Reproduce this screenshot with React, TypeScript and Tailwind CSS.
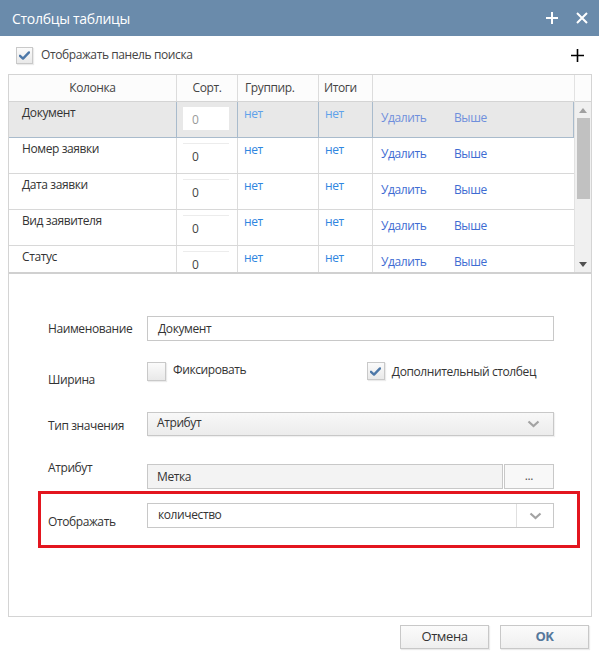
import React from "react";

const font = { fontFamily: '"Open Sans", "Noto Sans", sans-serif' };

function Check({ checked, size = 17 }: { checked: boolean; size?: number }) {
  return (
    <div
      className="flex items-center justify-center border border-[#c9c9c9] bg-gradient-to-b from-[#fbfbfb] to-[#e9e9e9] shadow-[1px_1px_1px_rgba(0,0,0,0.08)] shrink-0"
      style={{ width: size, height: size }}
    >
      {checked && (
        <svg width="11" height="9" viewBox="0 0 11 9">
          <path d="M1 4.8 L4 7.6 L10 1.4" fill="none" stroke="#4d78a8" strokeWidth="2.4" strokeLinecap="round" strokeLinejoin="round" />
        </svg>
      )}
    </div>
  );
}

function Chevron() {
  return (
    <svg width="13" height="8" viewBox="0 0 13 8">
      <path d="M1.5 1.5 L6.5 6 L11.5 1.5" fill="none" stroke="#a3a3a3" strokeWidth="2.2" />
    </svg>
  );
}

const rows = ["Документ", "Номер заявки", "Дата заявки", "Вид заявителя", "Статус"];

export default function App() {
  return (
    <div className="w-[599px] h-[657px] bg-white text-[12px] tracking-[-0.4px] text-[#333] overflow-hidden" style={font}>
      {/* Title bar */}
      <div className="h-[36px] bg-[#6a8bab] flex items-center pl-[12px] pr-[11px]">
        <span className="text-white text-[14px] tracking-[-0.3px]">Столбцы таблицы</span>
        <div className="ml-auto flex items-center gap-[18px]">
          <svg width="12" height="12" viewBox="0 0 12 12">
            <path d="M6 0 V12 M0 6 H12" stroke="white" strokeWidth="2" />
          </svg>
          <svg width="12" height="12" viewBox="0 0 12 12">
            <path d="M1 1 L11 11 M11 1 L1 11" stroke="white" strokeWidth="2" />
          </svg>
        </div>
      </div>

      {/* search toggle */}
      <div className="h-[38px] flex items-center pl-[16px] pr-[15px]">
        <Check checked size={17} />
        <span className="ml-[8px] text-[#444]">Отображать панель поиска</span>
        <svg className="ml-auto" width="13" height="13" viewBox="0 0 13 13">
          <path d="M6.5 0 V13 M0 6.5 H13" stroke="black" strokeWidth="1.6" />
        </svg>
      </div>

      {/* Main panel */}
      <div className="ml-[8px] w-[584px] h-[543px] border border-[#d4d4d4] flex flex-col">
        {/* Table */}
        <div className="h-[199px] border-b-2 border-[#d0d0d0] flex">
          <div className="w-[565px] flex flex-col">
            {/* header row */}
            <div className="h-[27px] flex border-b border-[#d4d4d4] bg-[#fcfcfc] text-[#444] shrink-0">
              <div className="w-[168px] border-r border-[#dcdcdc] flex items-center justify-center">Колонка</div>
              <div className="w-[61px] border-r border-[#dcdcdc] flex items-center justify-center">Сорт.</div>
              <div className="w-[81px] border-r border-[#dcdcdc] flex items-center pl-[7px]">Группир.</div>
              <div className="w-[54px] border-r border-[#dcdcdc] flex items-center pl-[5px]">Итоги</div>
              <div className="flex-1" />
            </div>
            <div className="flex-1 overflow-hidden">
              {rows.map((r, i) => {
                const sel = i === 0;
                const bc = sel ? "border-[#a9bbcc]" : "border-[#dcdcdc]";
                return (
                  <div
                    key={r}
                    className={`h-[36px] flex border-b ${sel ? "bg-[#e8e8e8] border-[#a9bbcc] border-t border-r h-[37px] -mt-[1px]" : "border-[#d8d8d8]"}`}
                  >
                    <div className={`w-[168px] border-r ${bc} pl-[13px] pt-[2px]`}>{r}</div>
                    <div className={`w-[61px] border-r ${bc} pl-[6px] pt-[5px]`}>
                      <div className={`w-[46px] h-[23px] bg-white ${sel ? "" : "border-t border-[#ececec]"} pl-[9px] pt-[4px] ${sel ? "text-[#999]" : "text-[#444]"}`}>0</div>
                    </div>
                    <div className={`w-[81px] border-r ${bc} pl-[6px] pt-[3px] ${sel ? "text-[#5fa2ea]" : "text-[#2f86e0]"}`}>нет</div>
                    <div className={`w-[54px] border-r ${bc} pl-[6px] pt-[3px] ${sel ? "text-[#5fa2ea]" : "text-[#2f86e0]"}`}>нет</div>
                    <div className={`flex-1 flex pl-[8px] pt-[7px] ${sel ? "text-[#6f8fdc]" : "text-[#3e6bd2]"}`}>
                      <span className="w-[73px]">Удалить</span>
                      <span>Выше</span>
                    </div>
                  </div>
                );
              })}
            </div>
          </div>
          {/* scrollbar */}
          <div className="w-[17px] bg-[#f0f0f0] border-l border-[#e2e2e2] flex flex-col items-center">
            <div className="h-[27px] w-full bg-[#fcfcfc] border-b border-[#d4d4d4]" />
            <div className="h-[16px] flex items-center justify-center">
              <svg width="8" height="5" viewBox="0 0 8 5"><path d="M0 5 L4 0 L8 5 Z" fill="#a0a0a0" /></svg>
            </div>
            <div className="w-[13px] h-[81px] bg-[#c1c1c1]" />
            <div className="flex-1" />
            <div className="h-[16px] flex items-center justify-center">
              <svg width="8" height="5" viewBox="0 0 8 5"><path d="M0 0 L8 0 L4 5 Z" fill="#505050" /></svg>
            </div>
          </div>
        </div>

        {/* Form */}
        <div className="pl-[29px] pr-[11px] pt-[42px] flex flex-col">
          {/* Наименование */}
          <div className="flex items-center h-[25px] pl-[10px] pr-[26px]">
            <div className="w-[99px]">Наименование</div>
            <div className="flex-1 h-[25px] border border-[#c8c8c8] bg-white flex items-center pl-[10px]">Документ</div>
          </div>
          {/* Ширина */}
          <div className="flex h-[24px] mt-[21px] pl-[10px] pr-[26px]">
            <div className="w-[99px] pt-[9px]">Ширина</div>
            <div className="flex-1 flex items-start">
              <Check checked={false} size={19} />
              <span className="ml-[7px] -mt-[1px]">Фиксировать</span>
              <div className="ml-auto mr-[18px] flex items-start">
                <Check checked size={18} />
                <span className="ml-[7px] pt-[1px]">Дополнительный столбец</span>
              </div>
            </div>
          </div>
          {/* Тип значения */}
          <div className="flex h-[24px] mt-[26px] pl-[10px] pr-[26px]">
            <div className="w-[99px] pt-[5px]">Тип значения</div>
            <div className="flex-1 h-[24px] border border-[#c8c8c8] bg-gradient-to-b from-[#f8f8f8] to-[#ececec] flex items-center pl-[9px] pr-[13px] shadow-[1px_1px_1px_rgba(0,0,0,0.06)]">
              <span className="-mt-[3px]">Атрибут</span>
              <span className="ml-auto"><Chevron /></span>
            </div>
          </div>
          {/* Атрибут */}
          <div className="flex h-[25px] mt-[28px] pl-[10px] pr-[26px]">
            <div className="w-[99px] -mt-[5px]">Атрибут</div>
            <div className="flex-1 h-[25px] flex">
              <div className="flex-1 border border-[#c8c8c8] bg-[#f3f3f3] flex items-center pl-[9px] pt-[1px]">Метка</div>
              <div className="w-[50px] border border-[#c8c8c8] bg-[#f8f8f8] ml-[1px] flex items-center justify-center text-[#555] pb-[2px]">...</div>
            </div>
          </div>
          {/* Отображать (highlighted) */}
          <div className="mt-[2px] h-[57px] border-[3px] border-[#e3161f] pl-[7px] pr-[23px] pt-[9px]">
            <div className="flex h-[25px]">
              <div className="w-[99px] pt-[10px]">Отображать</div>
              <div className="flex-1 h-[25px] border border-[#c8c8c8] bg-white flex">
                <span className="flex-1 pl-[10px] pt-[2px]">количество</span>
                <div className="w-[37px] border-l border-[#e0e0e0] flex items-center justify-center">
                  <Chevron />
                </div>
              </div>
            </div>
          </div>
        </div>
      </div>

      {/* Buttons */}
      <div className="flex justify-end gap-[11px] pr-[10px] mt-[8px]">
        <button className="w-[89px] h-[24px] border border-[#c8c8c8] bg-gradient-to-b from-[#fbfbfb] to-[#efefef] text-[13px] text-[#333] shadow-[1px_1px_1px_rgba(0,0,0,0.08)]">Отмена</button>
        <button className="w-[89px] h-[24px] border border-[#c8c8c8] bg-gradient-to-b from-[#fbfbfb] to-[#efefef] text-[13px] font-bold text-[#56789c] shadow-[1px_1px_1px_rgba(0,0,0,0.08)]">OK</button>
      </div>
    </div>
  );
}
